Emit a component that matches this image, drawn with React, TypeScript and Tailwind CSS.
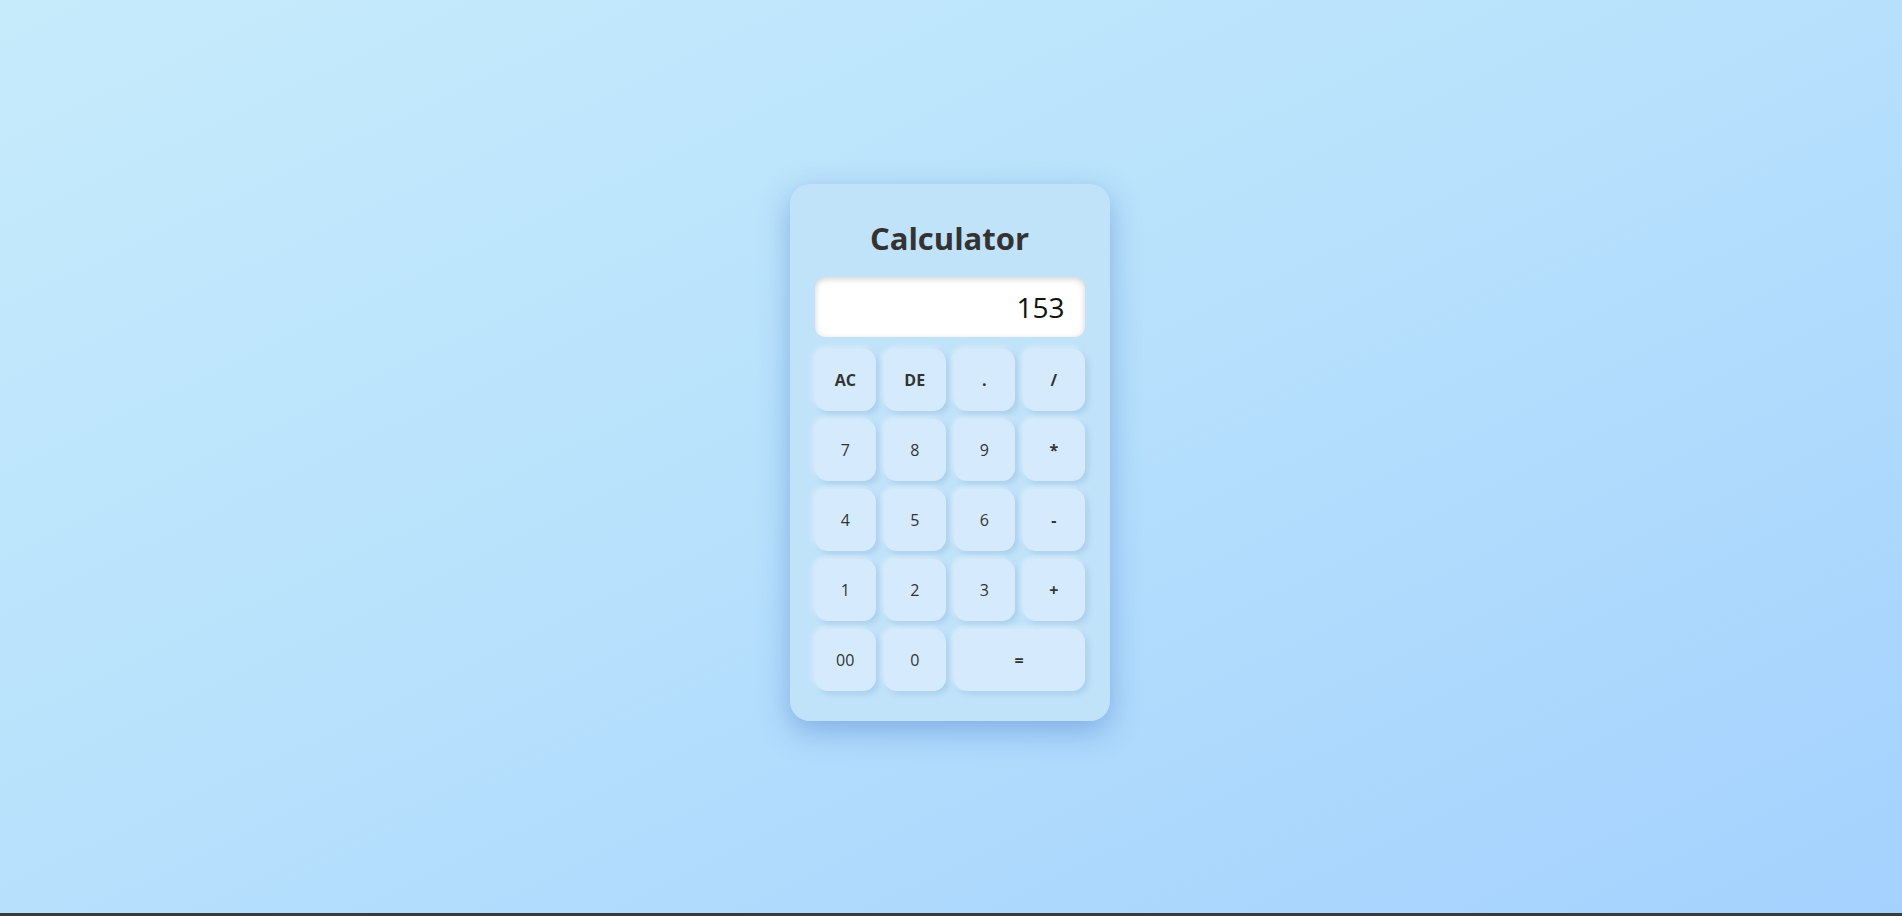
import React from "react";

const keys: { label: string; op?: boolean; wide?: boolean }[] = [
  { label: "AC", op: true },
  { label: "DE", op: true },
  { label: ".", op: true },
  { label: "/", op: true },
  { label: "7" },
  { label: "8" },
  { label: "9" },
  { label: "*", op: true },
  { label: "4" },
  { label: "5" },
  { label: "6" },
  { label: "-", op: true },
  { label: "1" },
  { label: "2" },
  { label: "3" },
  { label: "+", op: true },
  { label: "00" },
  { label: "0" },
  { label: "=", op: true, wide: true },
];

export default function App() {
  return (
    <div className="w-full h-[916px] flex flex-col" style={{ fontFamily: '"Open Sans", "Noto Sans", sans-serif' }}>
      <div className="h-[913px] w-full flex items-center justify-center pb-[8px] pr-[3px] bg-gradient-to-br from-[#c6ebfb] via-[#b6e0fc] to-[#a4d1fe]">
        <div className="w-[320px] rounded-[20px] bg-[#c1e3fa] px-[25px] pt-[25px] pb-[30px] shadow-[0_10px_30px_rgba(50,100,190,0.38)]">
          <h1 className="text-center text-[31px] font-bold leading-[58px] text-[#333] mb-[10px]">Calculator</h1>
          <div className="h-[60px] rounded-[10px] bg-white flex items-center justify-end pr-[20px] text-[28px] text-[#111] shadow-[inset_0_2px_6px_rgba(0,0,0,0.18)]">
            153
          </div>
          <div className="mt-[12px] grid grid-cols-4 gap-[8px] auto-rows-[62px]">
            {keys.map((k) => (
              <button
                key={k.label}
                className={`rounded-[13px] bg-[#d5ebfd] flex items-center justify-center text-[16px] text-[#333] shadow-[3px_3px_6px_rgba(60,110,170,0.18),-2px_-2px_5px_rgba(255,255,255,0.45)] ${
                  k.op ? "font-bold" : "font-normal"
                } ${k.wide ? "col-span-2" : ""}`}
              >
                {k.label}
              </button>
            ))}
          </div>
        </div>
      </div>
      <div className="h-[3px] w-full bg-[#3a3a3a]" />
    </div>
  );
}
